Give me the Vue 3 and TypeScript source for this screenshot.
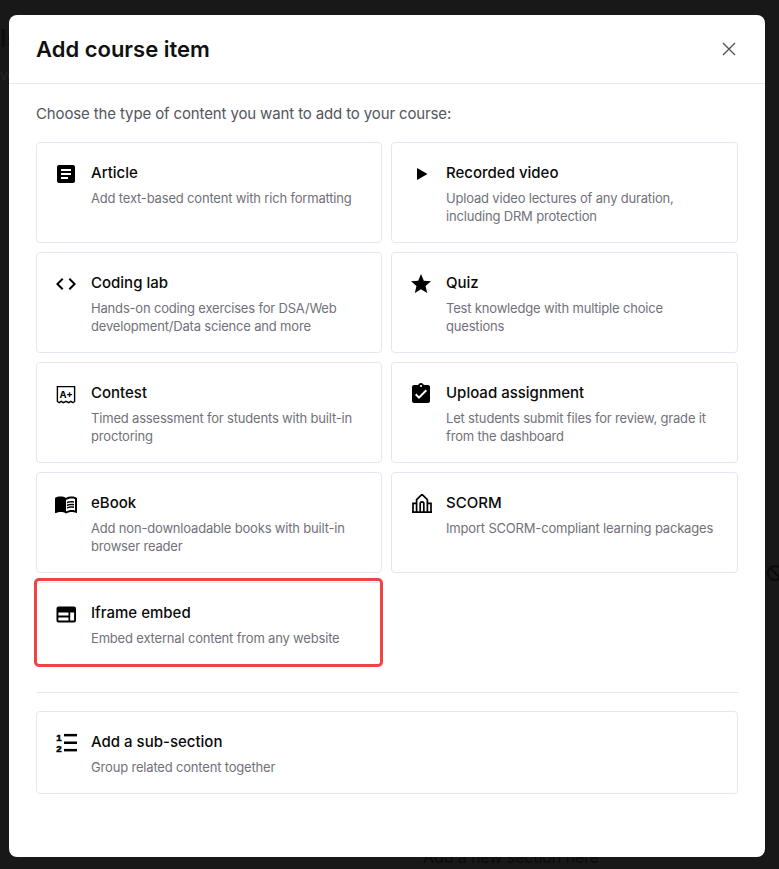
<script setup lang="ts">
interface Item {
  title: string
  desc: string
  icon: string
  highlighted?: boolean
}

const items: Item[] = [
  { title: 'Article', desc: 'Add text-based content with rich formatting', icon: 'article' },
  { title: 'Recorded video', desc: 'Upload video lectures of any duration, including DRM protection', icon: 'play' },
  { title: 'Coding lab', desc: 'Hands-on coding exercises for DSA/Web development/Data science and more', icon: 'code' },
  { title: 'Quiz', desc: 'Test knowledge with multiple choice questions', icon: 'star' },
  { title: 'Contest', desc: 'Timed assessment for students with built-in proctoring', icon: 'contest' },
  { title: 'Upload assignment', desc: 'Let students submit files for review, grade it from the dashboard', icon: 'assignment' },
  { title: 'eBook', desc: 'Add non-downloadable books with built-in browser reader', icon: 'book' },
  { title: 'SCORM', desc: 'Import SCORM-compliant learning packages', icon: 'scorm' },
  { title: 'Iframe embed', desc: 'Embed external content from any website', icon: 'web', highlighted: true },
]

const paths: Record<string, string> = {
  article: 'M19 3H5c-1.1 0-2 .9-2 2v14c0 1.1.9 2 2 2h14c1.1 0 2-.9 2-2V5c0-1.1-.9-2-2-2zm-5 14H7v-2h7v2zm3-4H7v-2h10v2zm0-4H7V7h10v2z',
  play: 'M8 6v12l10.5-6z',
  code: 'M9.4 16.6 4.8 12l4.6-4.6L8 6l-6 6 6 6 1.4-1.4zm5.2 0 4.6-4.6-4.6-4.6L16 6l6 6-6 6-1.4-1.4z',
  star: 'M12 17.27 18.18 21l-1.64-7.03L22 9.24l-7.19-.61L12 2 9.19 8.63 2 9.24l5.46 4.73L5.82 21z',
  assignment: 'M19 3h-4.18C14.4 1.84 13.3 1 12 1c-1.3 0-2.4.84-2.82 2H5c-1.1 0-2 .9-2 2v14c0 1.1.9 2 2 2h14c1.1 0 2-.9 2-2V5c0-1.1-.9-2-2-2zm-7 0c.55 0 1 .45 1 1s-.45 1-1 1-1-.45-1-1 .45-1 1-1zm-2 14-4-4 1.41-1.41L10 14.17l6.59-6.59L18 9l-8 8z',
  book: 'M21 5c-1.11-.35-2.33-.5-3.5-.5-1.95 0-4.05.4-5.5 1.5-1.45-1.1-3.55-1.5-5.5-1.5S2.45 4.9 1 6v14.65c0 .25.25.5.5.5.1 0 .15-.05.25-.05C3.1 20.45 5.05 20 6.5 20c1.95 0 4.05.4 5.5 1.5 1.35-.85 3.8-1.5 5.5-1.5 1.65 0 3.35.3 4.75 1.05.1.05.15.05.25.05.25 0 .5-.25.5-.5V6c-.6-.45-1.25-.75-2-1zm0 13.5c-1.1-.35-2.3-.5-3.5-.5-1.7 0-4.15.65-5.5 1.5V8c1.35-.85 3.8-1.5 5.5-1.5 1.2 0 2.4.15 3.5.5v11.5zM17.5 10.5c.88 0 1.73.09 2.5.26V9.24c-.79-.15-1.64-.24-2.5-.24-1.7 0-3.24.29-4.5.83v1.66c1.13-.64 2.7-.99 4.5-.99zM13 12.49v1.66c1.13-.64 2.7-.99 4.5-.99.88 0 1.73.09 2.5.26V11.9c-.79-.15-1.64-.24-2.5-.24-1.7 0-3.24.3-4.5.83zM17.5 14.33c-1.7 0-3.24.29-4.5.83v1.66c1.13-.64 2.7-.99 4.5-.99.88 0 1.73.09 2.5.26v-1.52c-.79-.16-1.64-.24-2.5-.24z',
  web: 'M20 4.5H4.5c-1.1 0-2 .9-2 2v12c0 1.1.9 2 2 2H20c1.1 0 2-.9 2-2v-12c0-1.1-.9-2-2-2zM14.5 18.6H4.4v-3.2h10.1v3.2zm0-5H4.4v-3.2h10.1v3.2zm5.6 5h-3.9v-8.2h3.9v8.2z',
}
</script>

<template>
  <div class="page">
    <span class="ghost ghost-a">ls</span>
    <span class="ghost ghost-b">ve</span>
    <span class="ghost ghost-c">Add a new section here</span>
    <span class="ghost-ring"></span>

    <section class="modal">
      <header class="modal-head">
        <h2>Add course item</h2>
        <svg class="close" viewBox="0 0 14 14" width="14" height="14">
          <path d="M1 1l12 12M13 1L1 13" />
        </svg>
      </header>
      <div class="modal-body">
        <p class="intro">Choose the type of content you want to add to your course:</p>
        <div class="grid">
          <div
            v-for="item in items"
            :key="item.title"
            class="card"
            :class="{ highlighted: item.highlighted }"
          >
            <svg class="icon" viewBox="0 0 24 24" width="24" height="24">
              <template v-if="item.icon === 'contest'">
                <path class="line thin" d="M3.4 4.6h17.2v14.9l-1.7 1.2-2.1-1.4-2.2 1.4-2.6-1.4-2.6 1.4-2.2-1.4-2.1 1.4-1.7-1.2z" />
                <text x="12" y="15.6" text-anchor="middle" class="icon-text">A+</text>
              </template>
              <template v-else-if="item.icon === 'scorm'">
                <path class="line" d="M13 2.4 7.6 7.6v12M18.4 7.6v12M13 2.4l5.4 5.2M3 20.2h20M4 19.6V11.4h3.6M22 19.6V11.4h-3.6M11.2 19.6v-8M14.8 19.6v-8M11.2 11.6c0-2.4 3.6-2.4 3.6 0" />
              </template>
              <path v-else :d="paths[item.icon]" />
            </svg>
            <div class="copy">
              <h3>{{ item.title }}</h3>
              <p>{{ item.desc }}</p>
            </div>
          </div>
        </div>
        <hr class="divider" />
        <div class="card">
          <svg class="icon" viewBox="0 0 24 24" width="24" height="24">
            <text class="num" x="5" y="9.9" text-anchor="middle">1</text>
            <text class="num" x="5" y="21.3" text-anchor="middle">2</text>
            <rect x="10" y="2.9" width="13" height="2.5" />
            <rect x="10" y="10.5" width="13" height="2.5" />
            <rect x="10" y="17.9" width="13" height="2.5" />
          </svg>
          <div class="copy">
            <h3>Add a sub-section</h3>
            <p>Group related content together</p>
          </div>
        </div>
      </div>
    </section>
  </div>
</template>

<style scoped>
.page {
  position: relative;
  box-sizing: border-box;
  width: 779px;
  height: 869px;
  overflow: hidden;
  padding: 15px 14px 12px 9px;
  background: #181818;
  font-family: Inter, "Liberation Sans", sans-serif;
}
.ghost {
  position: absolute;
  color: #0d0d10;
  white-space: nowrap;
}
.ghost-a { left: 0; top: 24px; font-size: 24px; font-weight: 700; }
.ghost-b { left: 0; top: 66px; font-size: 14px; color: #26262a; }
.ghost-c { left: 423px; top: 847px; font-size: 16px; letter-spacing: -0.1px; color: #0a0a0a; }
.ghost-ring {
  position: absolute;
  left: 767px;
  top: 565px;
  width: 12px;
  height: 12px;
  border: 2px solid #0a0a0a;
  border-radius: 50%;
  background: linear-gradient(45deg, transparent 44%, #0a0a0a 44%, #0a0a0a 56%, transparent 56%);
}
.modal {
  position: relative;
  height: 842px;
  background: #fff;
  border-radius: 8px;
}
.modal-head {
  box-sizing: border-box;
  height: 69px;
  padding: 0 29px 0 27px;
  display: flex;
  align-items: center;
  justify-content: space-between;
  border-bottom: 1px solid #e4e7eb;
}
.modal-head h2 {
  margin: 0;
  font-size: 22px;
  line-height: 30px;
  font-weight: 600;
  color: #111;
}
.close path {
  fill: none;
  stroke: #52525b;
  stroke-width: 1.4;
}
.modal-body {
  padding: 18px 27px 0;
}
.intro {
  margin: 0 0 16px;
  font-size: 15px;
  line-height: 24px;
  letter-spacing: -0.13px;
  color: #55555e;
}
.grid {
  display: grid;
  grid-template-columns: 346px 347px;
  column-gap: 9px;
  row-gap: 9px;
}
.card {
  position: relative;
  display: flex;
  gap: 13px;
  padding: 19px 17px 17px;
  border: 1px solid #e2e8f0;
  border-radius: 4px;
  background: #fff;
}
.highlighted::after {
  content: "";
  position: absolute;
  inset: -5px -2px -3px -3px;
  border: 3px solid #ef4444;
  border-radius: 5px;
  pointer-events: none;
}
.icon {
  flex: none;
  fill: #000;
  fill-rule: evenodd;
}
.line {
  fill: none;
  stroke: #000;
  stroke-width: 1.7;
}
.thin {
  stroke-width: 1.4;
}
.icon-text {
  font-family: Inter, sans-serif;
  font-size: 9.5px;
  font-weight: 700;
  fill: #000;
}
.num {
  font-family: "Liberation Sans", sans-serif;
  font-size: 9.8px;
  font-weight: 700;
  fill: #000;
  stroke: #000;
  stroke-width: 0.5;
}
.copy h3 {
  margin: 0 0 5px;
  font-size: 15px;
  line-height: 22px;
  font-weight: 500;
  color: #0a0a0a;
}
.copy p {
  margin: 0;
  font-size: 13px;
  line-height: 18px;
  letter-spacing: -0.18px;
  color: #71717a;
}
.divider {
  margin: 27px 0 18px;
  border: 0;
  border-top: 1px solid #e4e7eb;
}
</style>

<style>
html, body {
  margin: 0;
  background: #181818;
}
</style>
